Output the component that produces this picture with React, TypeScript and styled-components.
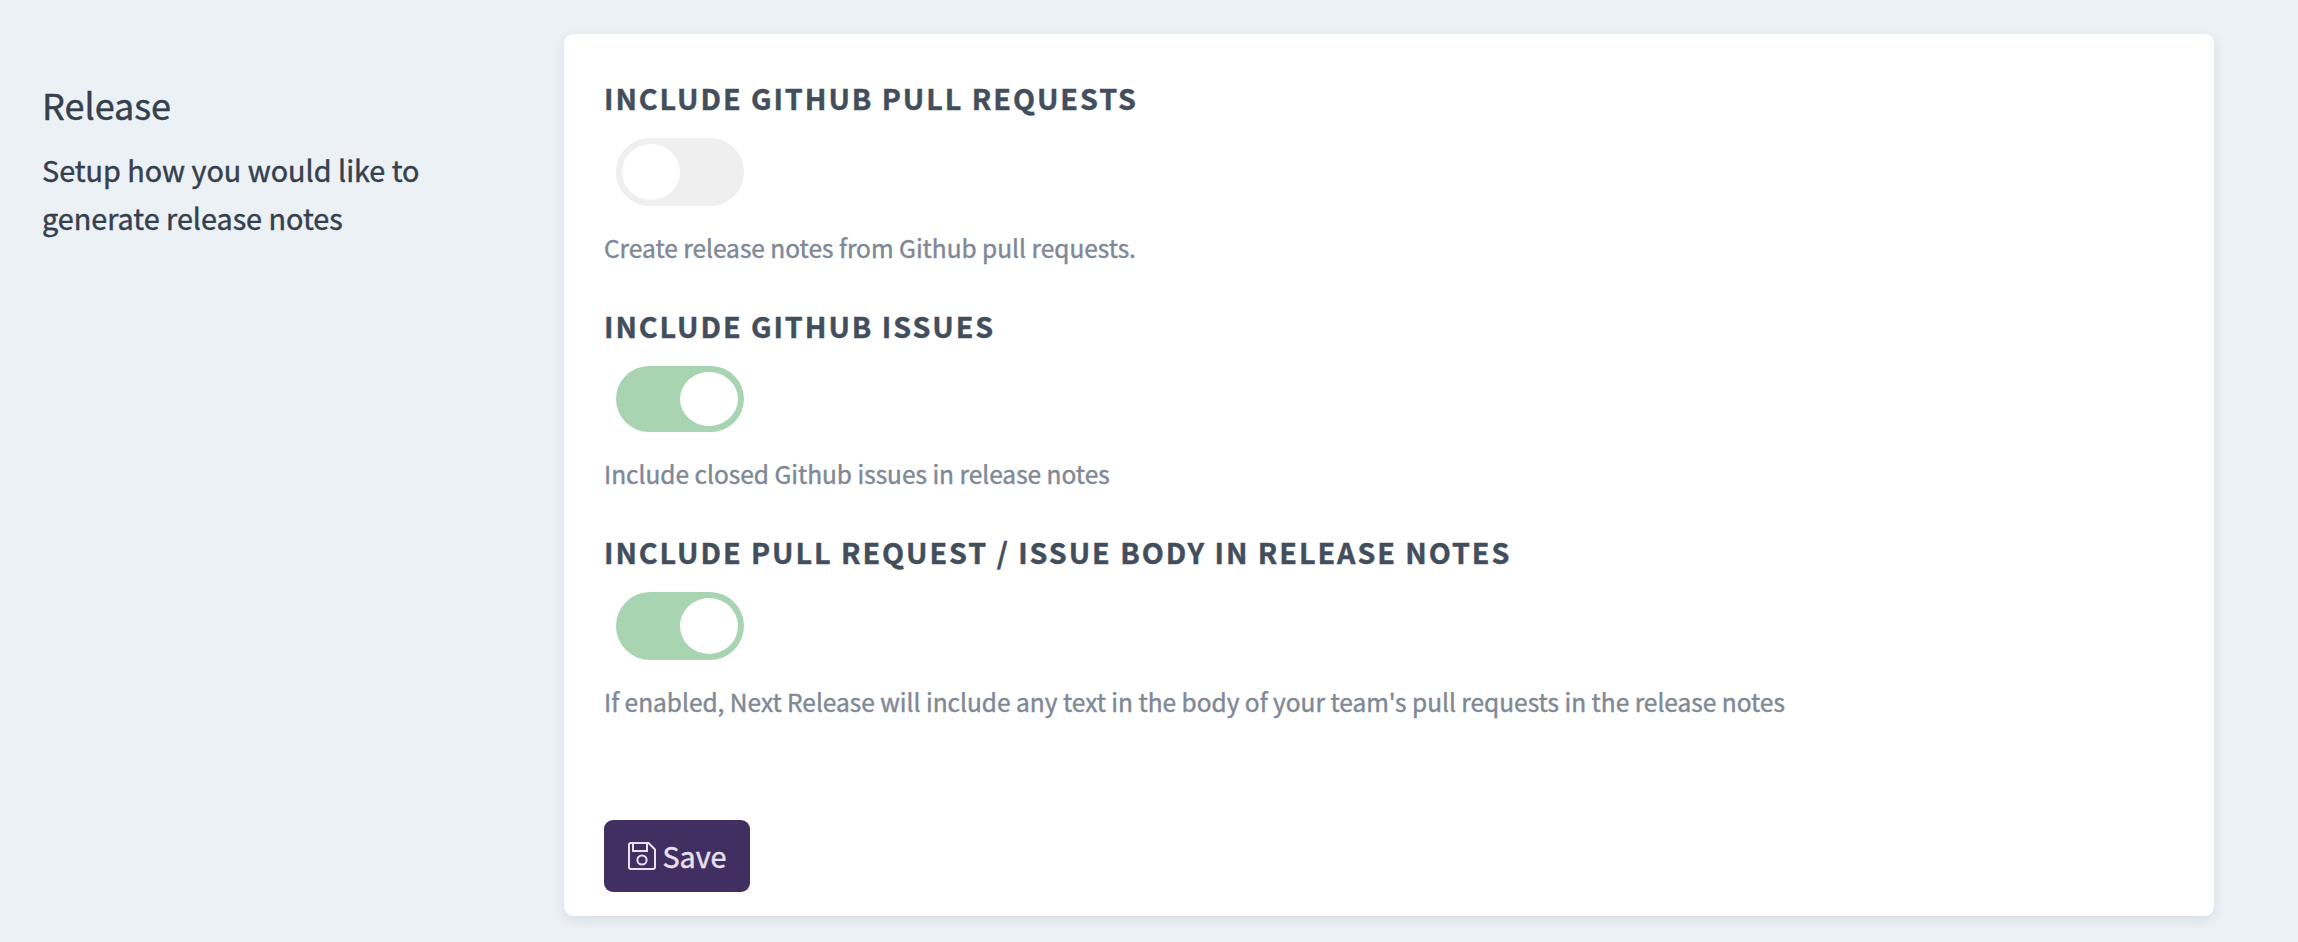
import React, { useState } from "react";
import styled, { createGlobalStyle } from "styled-components";

const GlobalStyle = createGlobalStyle`
  * { box-sizing: border-box; }
  body {
    margin: 0;
    background: #ebf1f5;
    font-family: "Noto Sans CJK JP", "Noto Sans", sans-serif;
    color: #36404d;
    -webkit-text-stroke: 0.45px currentColor;
  }
`;

const Page = styled.main`
  display: grid;
  grid-template-columns: 478px 1650px;
  column-gap: 44px;
  height: 942px;
  padding: 34px 0 26px 42px;
`;

const Intro = styled.aside`
  padding-top: 45px;
`;

const Title = styled.h3`
  margin: 0 0 17px;
  font-size: 36px;
  line-height: 50px;
  font-weight: 400;
`;

const Lead = styled.p`
  margin: 0;
  width: 400px;
  font-size: 28.75px;
  line-height: 48px;
`;

const Card = styled.form`
  display: flex;
  flex-direction: column;
  align-items: flex-start;
  padding: 40px 40px 24px;
  background: #fff;
  border-radius: 9px;
  box-shadow: 0 4px 12px rgba(50, 60, 80, 0.1);
`;

const Setting = styled.section<{ $height: number }>`
  display: flex;
  flex-direction: column;
  align-items: flex-start;
  height: ${(p) => p.$height}px;
`;

const Label = styled.h4`
  margin: 0 0 16px;
  font-size: 28.7px;
  line-height: 48px;
  font-weight: 700;
  letter-spacing: 1.95px;
  text-transform: uppercase;
  white-space: nowrap;
  color: #434e5c;
`;

const Track = styled.button<{ $on: boolean; $height: number }>`
  display: flex;
  justify-content: ${(p) => (p.$on ? "flex-end" : "flex-start")};
  width: 128px;
  height: ${(p) => p.$height}px;
  margin: 0 0 21px 12px;
  padding: 6px;
  border: 0;
  border-radius: 34px;
  background: ${(p) => (p.$on ? "#a9d4b2" : "#efefef")};
`;

const Knob = styled.span`
  width: 58px;
  height: 100%;
  border-radius: 50%;
  background: #fff;
`;

const Hint = styled.p`
  margin: 0;
  font-size: 24.46px;
  line-height: 42px;
  white-space: nowrap;
  color: #7f8996;
`;

const SaveButton = styled.button`
  display: flex;
  align-items: center;
  gap: 6.5px;
  width: 146px;
  height: 72px;
  margin-top: auto;
  padding: 0 0 0 24px;
  border: 0;
  border-radius: 9px;
  background: #422f62;
  color: #e8e2f0;
  font-family: inherit;
  font-size: 28.7px;
  line-height: 48px;
`;

const FloppyIcon = () => (
  <svg width="28" height="28" viewBox="0 0 28 28" fill="none" stroke="currentColor" strokeWidth="2">
    <path d="M3 1H20.5L27 7.5V25a2 2 0 0 1-2 2H3a2 2 0 0 1-2-2V3a2 2 0 0 1 2-2Z" />
    <path d="M5 1V9H19V1" />
    <circle cx="14" cy="18" r="4.6" />
  </svg>
);

type SettingData = { label: string; hint: string; on: boolean; track: number; height: number };

const SETTINGS: SettingData[] = [
  { label: "Include Github pull requests", hint: "Create release notes from Github pull requests.", on: false, track: 68, height: 228 },
  { label: "Include Github issues", hint: "Include closed Github issues in release notes", on: true, track: 66, height: 226 },
  { label: "Include pull request / issue body in release notes", hint: "If enabled, Next Release will include any text in the body of your team's pull requests in the release notes", on: true, track: 68, height: 228 },
];

const SettingRow = ({ data }: { data: SettingData }) => {
  const [on, setOn] = useState(data.on);
  return (
    <Setting $height={data.height}>
      <Label>{data.label}</Label>
      <Track type="button" role="switch" aria-checked={on} aria-label={data.label} $on={on} $height={data.track} onClick={() => setOn(!on)}>
        <Knob />
      </Track>
      <Hint>{data.hint}</Hint>
    </Setting>
  );
};

export default function App() {
  return (
    <>
      <GlobalStyle />
      <Page>
        <Intro>
          <Title>Release</Title>
          <Lead>Setup how you would like to generate release notes</Lead>
        </Intro>
        <Card onSubmit={(e) => e.preventDefault()}>
          {SETTINGS.map((s) => (
            <SettingRow key={s.label} data={s} />
          ))}
          <SaveButton type="submit">
            <FloppyIcon />
            Save
          </SaveButton>
        </Card>
      </Page>
    </>
  );
}
